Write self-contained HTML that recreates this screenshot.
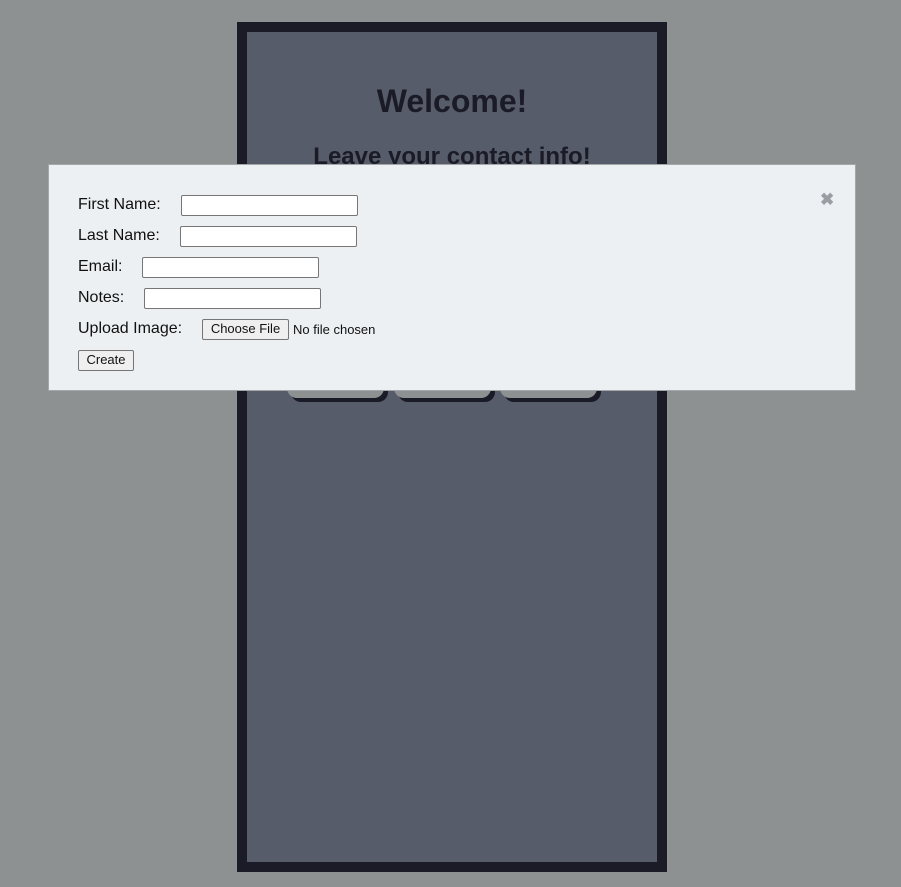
<!DOCTYPE html>
<html><head><meta charset="utf-8"><style>
*{box-sizing:border-box}
body{margin:0;width:901px;height:887px;background:#8e9192;position:relative;overflow:hidden;font-family:"Liberation Sans",Arial,sans-serif}
.box{position:absolute;left:237px;top:22px;width:430px;height:850px;background:#565c69;border:10px solid #1a1b27}
h1{position:absolute;left:0;right:0;top:53px;margin:0;text-align:center;font-size:32px;font-weight:bold;color:#1a1b27;line-height:1}
h2{position:absolute;left:0;right:0;top:113px;margin:0;text-align:center;font-size:24px;font-weight:bold;color:#1a1b27;line-height:1}
.btn{position:absolute;top:360px;width:97px;height:38px;background:#8e9192;border-radius:10px;box-shadow:4px 4px 0 #1a1b27}
.modal{position:absolute;left:48px;top:164px;width:808px;height:227px;background:#ecf0f3;border:1px solid #a4a7aa}
.lab{position:absolute;left:29px;font-size:16px;color:#111;line-height:18px}
.inp{position:absolute;height:21px;width:177px;background:#fff;border:1px solid #767676;border-radius:2px}
.b{position:absolute;font-size:13px;background:#efefef;border:1px solid #767676;border-radius:2px;color:#111;text-align:center;line-height:18px}
.x{position:absolute;left:771px;top:26px;font-size:17px;font-weight:bold;color:#9a9ea3;line-height:18px}
</style></head><body>
<div class="box">
<h1>Welcome!</h1>
<h2>Leave your contact info!</h2>
</div>
<div class="btn" style="left:287px"></div>
<div class="btn" style="left:394px"></div>
<div class="btn" style="left:500px"></div>
<div class="modal">
<div class="lab" style="top:31px">First Name:</div><div class="inp" style="left:132px;top:30px"></div>
<div class="lab" style="top:62px">Last Name:</div><div class="inp" style="left:131px;top:61px"></div>
<div class="lab" style="top:93px">Email:</div><div class="inp" style="left:93px;top:92px"></div>
<div class="lab" style="top:124px">Notes:</div><div class="inp" style="left:95px;top:123px"></div>
<div class="lab" style="top:155px">Upload Image:</div>
<div class="b" style="left:153px;top:154px;width:87px;height:21px">Choose File</div>
<div style="position:absolute;left:244px;top:157px;font-size:13px;color:#111">No file chosen</div>
<div class="b" style="left:29px;top:185px;width:56px;height:21px">Create</div>
<div class="x">&#x2716;</div>
</div>
</body></html>
